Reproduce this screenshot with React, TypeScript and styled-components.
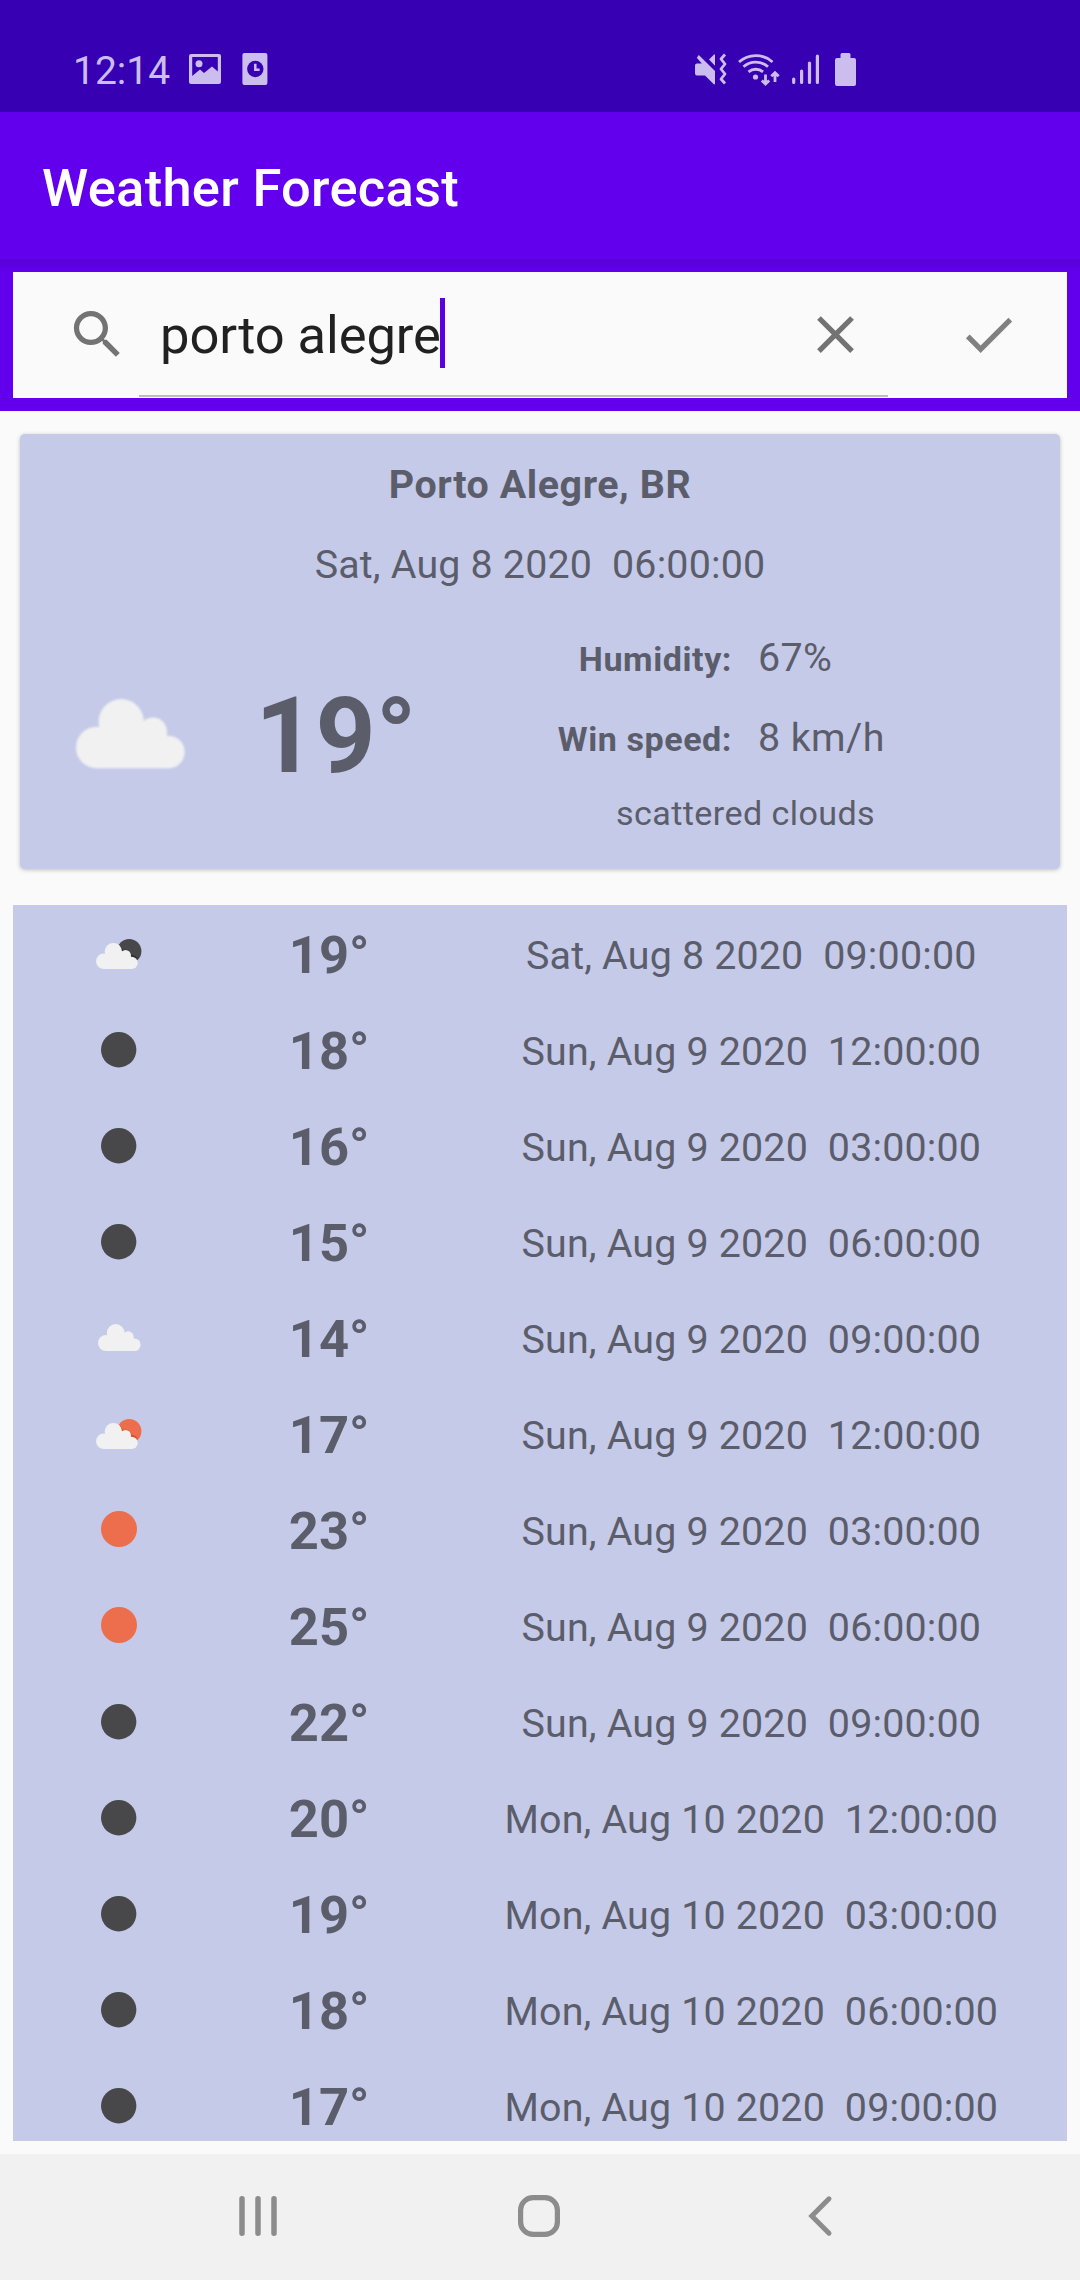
import React from 'react';
import styled, { createGlobalStyle } from 'styled-components';

const GlobalStyle = createGlobalStyle`
  * { box-sizing: border-box; }
  body {
    margin: 0;
    background: #fafafa;
    font-family: Roboto, "Liberation Sans", sans-serif;
  }
  svg { display: block; flex: none; overflow: visible; }
`;

const Screen = styled.div`
  width: 1080px;
  height: 2280px;
  display: flex;
  flex-direction: column;
  overflow: hidden;
  background: #fafafa;
`;

const StatusBar = styled.header`
  flex: none;
  height: 112px;
  padding: 26px 224px 0 73px;
  display: flex;
  align-items: center;
  justify-content: space-between;
  background: #3700b3;
  color: #cbbdee;
`;

const StatusGroup = styled.div<{ $gap: number }>`
  display: flex;
  align-items: center;
  gap: ${({ $gap }) => $gap}px;
`;

const Clock = styled.span`
  width: 94px;
  padding-top: 3px;
  font-size: 39px;
  line-height: 46px;
  white-space: nowrap;
`;

const BatterySlot = styled.div`
  margin-left: 4px;
`;

const Toolbar = styled.div`
  flex: none;
  height: 147px;
  padding-left: 42px;
  display: flex;
  align-items: center;
  background: #6200ee;
`;

const Title = styled.h1`
  margin: 4px 0 0;
  color: #fff;
  font-size: 52.5px;
  line-height: 62px;
  font-weight: 500;
  letter-spacing: 0.27px;
`;

const SearchFrame = styled.div`
  flex: none;
  height: 152px;
  padding: 13px;
  background: linear-gradient(#5700d6, #6200ee 13px);
`;

const SearchBar = styled.div`
  height: 126px;
  display: flex;
  background: #fafafa;
`;

const IconSlot = styled.div<{ $width: number; $left: number; $color: string }>`
  flex: none;
  width: ${({ $width }) => $width}px;
  padding: 31px 0 0 ${({ $left }) => $left}px;
  color: ${({ $color }) => $color};
`;

const SearchField = styled.div`
  width: 749px;
  height: 125px;
  display: flex;
  border-bottom: 2px solid #bbbdbb;
`;

const Query = styled.div`
  flex: 1;
  display: flex;
  align-items: flex-start;
  padding: 26px 0 0 21px;
  color: #212121;
  font-size: 52.5px;
  line-height: 74px;
  letter-spacing: -0.1px;
  white-space: nowrap;
`;

const Caret = styled.span`
  width: 5px;
  height: 70px;
  margin-left: -1px;
  background: #5c00df;
`;

const Card = styled.section`
  flex: none;
  height: 435px;
  margin: 23px 20px 0;
  padding-top: 28px;
  border-radius: 5px;
  background: #c5cae9;
  box-shadow: 0 1px 4px rgba(0, 0, 0, 0.24);
  color: #5b5d6b;
  text-align: center;
`;

const Line = styled.div<{ $bold?: boolean }>`
  font-size: 39.4px;
  line-height: 46px;
  font-weight: ${({ $bold }) => ($bold ? 700 : 400)};
  letter-spacing: ${({ $bold }) => ($bold ? 0.56 : 0.18)}px;
  white-space: pre;
  & + & { margin-top: 34px; }
`;

const Current = styled.div`
  margin-top: 47px;
  height: 199px;
  display: grid;
  grid-template-columns: 221px 190px 629px;
  align-items: center;
  justify-items: center;
`;

const CurrentTemp = styled.div`
  padding-top: 4px;
  font-size: 105px;
  line-height: 124px;
  font-weight: 700;
`;

const Soft = styled.div`
  padding-bottom: 2px;
  filter: blur(0.9px);
`;

const Details = styled.div`
  width: 100%;
  align-self: start;
  display: flex;
  flex-direction: column;
`;

const Detail = styled.div`
  height: 46px;
  margin-bottom: 34px;
  display: grid;
  grid-template-columns: 301px 1fr;
  column-gap: 26px;
  align-items: baseline;
  text-align: left;
  line-height: 46px;
`;

const Label = styled.span`
  font-size: 34.1px;
  font-weight: 700;
  letter-spacing: 0.55px;
  text-align: right;
`;

const Value = styled.span`
  font-size: 39.4px;
  letter-spacing: 0.4px;
`;

const Description = styled.div`
  margin-top: -2px;
  font-size: 34.1px;
  line-height: 40px;
  letter-spacing: 0.42px;
`;

const List = styled.ul`
  flex: none;
  height: 1236px;
  margin: 36px 13px 13px;
  padding: 0;
  list-style: none;
  overflow: hidden;
  background: #c5cae9;
  color: #5b5d6b;
`;

const Row = styled.li`
  height: 96px;
  display: grid;
  grid-template-columns: 1fr 1fr 3fr;
  align-items: center;
  justify-items: center;
`;

const SkySlot = styled.div<{ $top: number }>`
  padding-top: ${({ $top }) => $top}px;
  padding-left: 1px;
`;

const Temp = styled.span`
  padding-top: 3px;
  font-size: 52.5px;
  line-height: 62px;
  font-weight: 700;
`;

const When = styled.span`
  padding: 5px 0 0 1px;
  font-size: 39.4px;
  line-height: 46px;
  letter-spacing: 0.17px;
  white-space: pre;
`;

const NavBar = styled.nav`
  flex: none;
  height: 126px;
  padding: 0 119px 2px 117px;
  display: grid;
  grid-template-columns: repeat(3, 1fr);
  align-items: center;
  justify-items: center;
  background: #f1f1f1;
  color: #8c8c8c;
`;

const PictureIcon = () => (
  <svg width="32" height="30" viewBox="0 0 32 30" fill="currentColor">
    <path
      fillRule="evenodd"
      d="M2 0h28a2 2 0 0 1 2 2v26a2 2 0 0 1-2 2H2a2 2 0 0 1-2-2V2a2 2 0 0 1 2-2zM3.200 3v19l7.800-6.500 4 3.500 8-6.500 5.800 5V3z"
    />
    <circle cx="10" cy="9.800" r="3.500" />
  </svg>
);

const AlarmCardIcon = () => (
  <svg width="25" height="32" viewBox="0.6 0 25 32">
    <rect width="25" height="32" rx="2" fill="currentColor" />
    <circle cx="12.900" cy="16" r="8.200" fill="#3700b3" />
    <path d="M12.900 10.700v6.100h4.300" fill="none" stroke="currentColor" strokeWidth="2.500" />
  </svg>
);

const MuteIcon = () => (
  <svg width="31" height="32" viewBox="0 0 31 32">
    <path
      fill="currentColor"
      d="M0 12.500a2 2 0 0 1 2-2h4.800L1.800 4.800 3.800 2 20 18v13.200h-1.200L10 22.500H2a2 2 0 0 1-2-2zM14 6.600 19 1.500h1v11.300z"
    />
    <path
      d="M30 1.500 26 6l4 5-4 5 4 5-4 5 4 4.500"
      fill="none"
      stroke="currentColor"
      strokeWidth="2.800"
      strokeLinejoin="round"
    />
  </svg>
);

const WifiIcon = () => (
  <svg width="41" height="33" viewBox="0 0 41 33" fill="none" stroke="currentColor" strokeWidth="2.800">
    <path d="M1 9a25 25 0 0 1 33.500 0M5.500 13.800a18.500 18.500 0 0 1 24.500 0M10.500 18.800a11.500 11.500 0 0 1 14.500 0" />
    <circle cx="17.500" cy="24" r="2.600" fill="currentColor" stroke="none" />
    <path d="M27.500 21.500v9M23.800 27.500l3.700 3.500 3.700-3.500M37 29v-9M33.300 23.300l3.700-3.500 3.700 3.500" />
  </svg>
);

const SignalIcon = () => (
  <svg width="27" height="32" viewBox="0 0 27 32" stroke="currentColor" strokeWidth="3.200" strokeLinecap="round">
    <path d="M1.700 26v3.500M9.600 18v11.500M17.500 10v19.500M25.400 3v26.500" />
  </svg>
);

const BatteryIcon = () => (
  <svg width="21" height="33" viewBox="0 0 21 33" fill="currentColor">
    <path d="M7 0h7a1.500 1.500 0 0 1 1.500 1.500V5H19a2 2 0 0 1 2 2v24a2 2 0 0 1-2 2H2a2 2 0 0 1-2-2V7a2 2 0 0 1 2-2h3.500V1.500A1.500 1.500 0 0 1 7 0z" />
  </svg>
);

const MaterialIcon = ({ d }: { d: string }) => (
  <svg width="63" height="63" viewBox="0 0 24 24" fill="currentColor">
    <path d={d} />
  </svg>
);

const SEARCH =
  'M15.5 14h-.79l-.28-.27C15.41 12.59 16 11.11 16 9.500 16 5.910 13.090 3 9.500 3S3 5.910 3 9.500 5.910 16 9.500 16c1.610 0 3.090-.59 4.230-1.570l.27.28v.79l5 4.990L20.490 19l-4.990-5zm-6 0C7.010 14 5 11.990 5 9.500S7.010 5 9.500 5 14 7.010 14 9.500 11.990 14 9.500 14z';
const CLOSE =
  'M19 6.410L17.590 5 12 10.590 6.410 5 5 6.410 10.590 12 5 17.590 6.410 19 12 13.410 17.590 19 19 17.590 13.410 12z';
const CHECK = 'M9 16.170L4.830 12l-1.420 1.410L9 19 21 7l-1.410-1.410z';

const CloudShape = () => (
  <>
    <circle cx="20.700" cy="48.500" r="20.700" />
    <circle cx="45.200" cy="22.700" r="22.600" />
    <circle cx="77" cy="32.600" r="14" />
    <circle cx="92.500" cy="53" r="16.200" />
    <path d="M20.700 69.200V30H88l4.500 10v29.200z" />
  </>
);

const Cloud = ({ width }: { width: number }) => (
  <svg width={width} height={(width * 69.2) / 108.7} viewBox="0 0 108.7 69.2" fill="#f1f1f1">
    <CloudShape />
  </svg>
);

const PartlyCloudy = ({ color, edge }: { color: string; edge: string }) => (
  <svg width="46" height="30" viewBox="0 0 46 30">
    <circle cx="33.200" cy="12.200" r="12.200" fill={color} />
    <path d="M23.500 7.500c2 2 2.500 4 3 5.500 3-3 7.500-.5 8 4 3-.5 5 .8 6.500 3" fill="none" stroke={edge} strokeWidth="2" />
    <g transform="translate(0 4) scale(0.384 0.376)" fill="#f1f1f1">
      <CloudShape />
    </g>
  </svg>
);

const Disc = ({ color, size }: { color: string; size: number }) => (
  <svg width={size} height={size} viewBox="0 0 36 36">
    <circle cx="18" cy="18" r="18" fill={color} />
  </svg>
);

type Sky = 'cloudNight' | 'cloudDay' | 'night' | 'sun' | 'cloud';

const SkyIcon = ({ sky }: { sky: Sky }) => {
  switch (sky) {
    case 'cloudNight':
      return <PartlyCloudy color="#48484a" edge="#2e2e30" />;
    case 'cloudDay':
      return <PartlyCloudy color="#ec6e4c" edge="#d94f28" />;
    case 'night':
      return <Disc color="#48484a" size={35.4} />;
    case 'sun':
      return <Disc color="#ec6e4c" size={36} />;
    default:
      return <Cloud width={42.6} />;
  }
};

const skyTop: Record<Sky, number> = { cloudNight: 1, cloudDay: 1, night: 2, sun: 0, cloud: 1 };

const forecast: { sky: Sky; temp: number; day: string; time: string }[] = [
  { sky: 'cloudNight', temp: 19, day: 'Sat, Aug 8 2020', time: '09:00:00' },
  { sky: 'night', temp: 18, day: 'Sun, Aug 9 2020', time: '12:00:00' },
  { sky: 'night', temp: 16, day: 'Sun, Aug 9 2020', time: '03:00:00' },
  { sky: 'night', temp: 15, day: 'Sun, Aug 9 2020', time: '06:00:00' },
  { sky: 'cloud', temp: 14, day: 'Sun, Aug 9 2020', time: '09:00:00' },
  { sky: 'cloudDay', temp: 17, day: 'Sun, Aug 9 2020', time: '12:00:00' },
  { sky: 'sun', temp: 23, day: 'Sun, Aug 9 2020', time: '03:00:00' },
  { sky: 'sun', temp: 25, day: 'Sun, Aug 9 2020', time: '06:00:00' },
  { sky: 'night', temp: 22, day: 'Sun, Aug 9 2020', time: '09:00:00' },
  { sky: 'night', temp: 20, day: 'Mon, Aug 10 2020', time: '12:00:00' },
  { sky: 'night', temp: 19, day: 'Mon, Aug 10 2020', time: '03:00:00' },
  { sky: 'night', temp: 18, day: 'Mon, Aug 10 2020', time: '06:00:00' },
  { sky: 'night', temp: 17, day: 'Mon, Aug 10 2020', time: '09:00:00' },
];

export default function App() {
  return (
    <Screen>
      <GlobalStyle />
      <StatusBar>
        <StatusGroup $gap={22}>
          <Clock>12:14</Clock>
          <PictureIcon />
          <AlarmCardIcon />
        </StatusGroup>
        <StatusGroup $gap={12.5}>
          <MuteIcon />
          <WifiIcon />
          <SignalIcon />
          <BatterySlot>
            <BatteryIcon />
          </BatterySlot>
        </StatusGroup>
      </StatusBar>
      <Toolbar>
        <Title>Weather Forecast</Title>
      </Toolbar>
      <SearchFrame>
        <SearchBar>
          <IconSlot $width={126} $left={53} $color="#737373">
            <MaterialIcon d={SEARCH} />
          </IconSlot>
          <SearchField>
            <Query>
              porto alegre
              <Caret />
            </Query>
            <IconSlot $width={84} $left={0} $color="#737373">
              <MaterialIcon d={CLOSE} />
            </IconSlot>
          </SearchField>
          <IconSlot $width={132} $left={69} $color="#808080">
            <MaterialIcon d={CHECK} />
          </IconSlot>
        </SearchBar>
      </SearchFrame>
      <Card>
        <Line $bold>Porto Alegre, BR</Line>
        <Line>{'Sat, Aug 8 2020  06:00:00'}</Line>
        <Current>
          <Soft>
            <Cloud width={108.7} />
          </Soft>
          <CurrentTemp>19°</CurrentTemp>
          <Details>
            <Detail>
              <Label>Humidity:</Label>
              <Value>67%</Value>
            </Detail>
            <Detail>
              <Label>Win speed:</Label>
              <Value>8 km/h</Value>
            </Detail>
            <Description>scattered clouds</Description>
          </Details>
        </Current>
      </Card>
      <List>
        {forecast.map(({ sky, temp, day, time }) => (
          <Row key={`${day} ${time} ${temp}`}>
            <SkySlot $top={skyTop[sky]}>
              <SkyIcon sky={sky} />
            </SkySlot>
            <Temp>{temp}°</Temp>
            <When>{`${day}  ${time}`}</When>
          </Row>
        ))}
      </List>
      <NavBar>
        <svg width="38" height="40" viewBox="0 0 38 40" stroke="currentColor" strokeWidth="5.500" strokeLinecap="round">
          <path d="M3 2.800v34.400M19 2.800v34.400M35 2.800v34.400" />
        </svg>
        <svg width="42" height="42" viewBox="0 0 42 42" fill="none" stroke="currentColor" strokeWidth="5.200">
          <rect x="2.600" y="2.600" width="36.800" height="36.800" rx="12.500" />
        </svg>
        <svg width="24" height="40" viewBox="0 0 24 40" fill="none" stroke="currentColor" strokeWidth="5" strokeLinecap="round">
          <path d="M21 2.800 3.800 20 21 37.200" />
        </svg>
      </NavBar>
    </Screen>
  );
}
